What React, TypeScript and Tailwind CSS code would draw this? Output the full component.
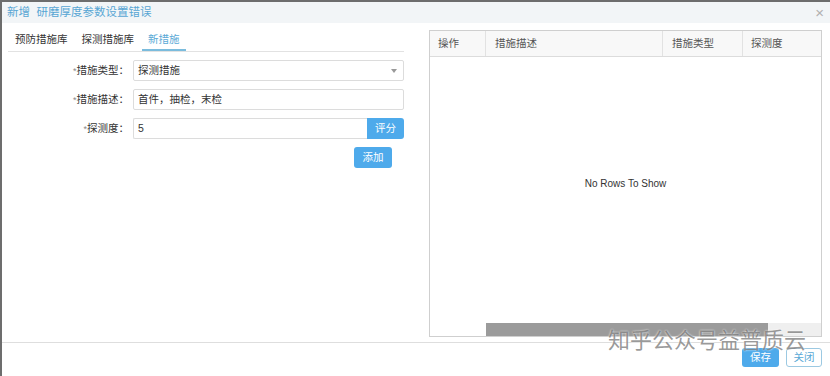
const App = () => {
    return (
        <div className="relative w-[830px] h-[376px] overflow-hidden bg-white border-t-2 border-l-2 border-[#6d6d6d] flex flex-col font-['Liberation_Sans','Noto_Sans_CJK_SC',sans-serif] text-[11px] text-[#333]">
            {/* title bar */}
            <div className="h-[21px] shrink-0 bg-[#f2f5f7] flex items-center justify-between pl-[5px] pr-[6px]">
                <span className="text-[11.5px] text-[#58a6d4]">新增&nbsp;&nbsp;研磨厚度参数设置错误</span>
                <span className="text-[15px] leading-none text-[#b0b0b0]">×</span>
            </div>

            {/* body */}
            <div className="flex-1 flex">
                <div className="w-[402px] pl-[6px] pt-[6px] flex flex-col">
                    <div className="h-[23px] flex gap-[2px] border-b border-[#e2e2e2] text-[10.5px]">
                        <div className="ml-[1px] px-[6px] flex items-center">预防措施库</div>
                        <div className="px-[6px] flex items-center">探测措施库</div>
                        <div className="px-[6px] flex items-center text-[#5aa9d6] shadow-[inset_0_-2px_0_#7bbcdd]">新措施</div>
                    </div>

                    <div className="mt-[8px] flex flex-col gap-[8px] text-[10.5px]">
                        <div className="flex items-center h-[21px]">
                            <label className="w-[125px] text-right pr-[4px]"><span className="text-[9px] text-[#888]">*</span>措施类型：</label>
                            <div className="flex-1 h-full border border-[#dcdcdc] rounded-[2px] flex items-center justify-between pl-[4px] pr-[6px]">
                                <span>探测措施</span>
                                <svg width="6" height="4" viewBox="0 0 6 4"><path d="M0 0h6L3 4z" fill="#999" /></svg>
                            </div>
                        </div>
                        <div className="flex items-center h-[21px]">
                            <label className="w-[125px] text-right pr-[4px]"><span className="text-[9px] text-[#888]">*</span>措施描述：</label>
                            <div className="flex-1 h-full border border-[#dcdcdc] rounded-[2px] flex items-center pl-[4px]">首件，抽检，末检</div>
                        </div>
                        <div className="flex items-center h-[21px]">
                            <label className="w-[125px] text-right pr-[4px]"><span className="text-[9px] text-[#888]">*</span>探测度：</label>
                            <div className="flex-1 h-full border border-[#dcdcdc] border-r-0 rounded-l-[2px] flex items-center pl-[4px]">5</div>
                            <button className="w-[37px] h-full bg-[#4eaaeb] text-white rounded-r-[3px]">评分</button>
                        </div>
                        <div className="flex justify-end pr-[12px]">
                            <button className="w-[38px] h-[21px] bg-[#4eaaeb] text-white rounded-[3px]">添加</button>
                        </div>
                    </div>
                </div>

                <div className="ml-[25px] w-[393px] pt-[7px] pb-[5px] flex">
                    <div className="relative flex-1 border border-[#cfcfcf] flex flex-col">
                        <div className="h-[26px] shrink-0 bg-[#f8f8f8] border-b border-[#dcdcdc] flex text-[10.5px] text-[#555]">
                            <div className="w-[56px] pl-[8px] flex items-center border-r border-[#e2e2e2]">操作</div>
                            <div className="w-[177px] pl-[9px] flex items-center border-r border-[#e2e2e2]">措施描述</div>
                            <div className="w-[80px] pl-[9px] flex items-center border-r border-[#e2e2e2]">措施类型</div>
                            <div className="flex-1 pl-[8px] flex items-center">探测度</div>
                        </div>
                        <div className="flex-1" />
                        <div className="h-[13px] shrink-0 flex">
                            <div className="w-[56px] bg-white" />
                            <div className="w-[282px] bg-[#9b9b9b]" />
                            <div className="flex-1 bg-[#efefef]" />
                        </div>
                        <div className="absolute inset-0 flex items-center justify-center text-[10px] text-[#333]">No Rows To Show</div>
                    </div>
                </div>
            </div>

            {/* footer */}
            <div className="h-[34px] shrink-0 border-t border-[#dedede] flex justify-end items-start gap-[7px] pt-[5px] pr-[8px] text-[10.5px]">
                <button className="w-[37px] h-[19px] bg-[#4eaaeb] text-white rounded-[3px]">保存</button>
                <button className="w-[36px] h-[19px] bg-white text-[#5aa9d6] border border-[#9cc9e2] rounded-[3px]">关闭</button>
            </div>

            {/* watermark */}
            <div className="absolute left-[606px] top-[328px] text-[22px] leading-none text-[#555]/60 [text-shadow:0_0_2px_#fff] whitespace-nowrap">知乎公众号益普质云</div>
        </div>
    )
}

export default App
